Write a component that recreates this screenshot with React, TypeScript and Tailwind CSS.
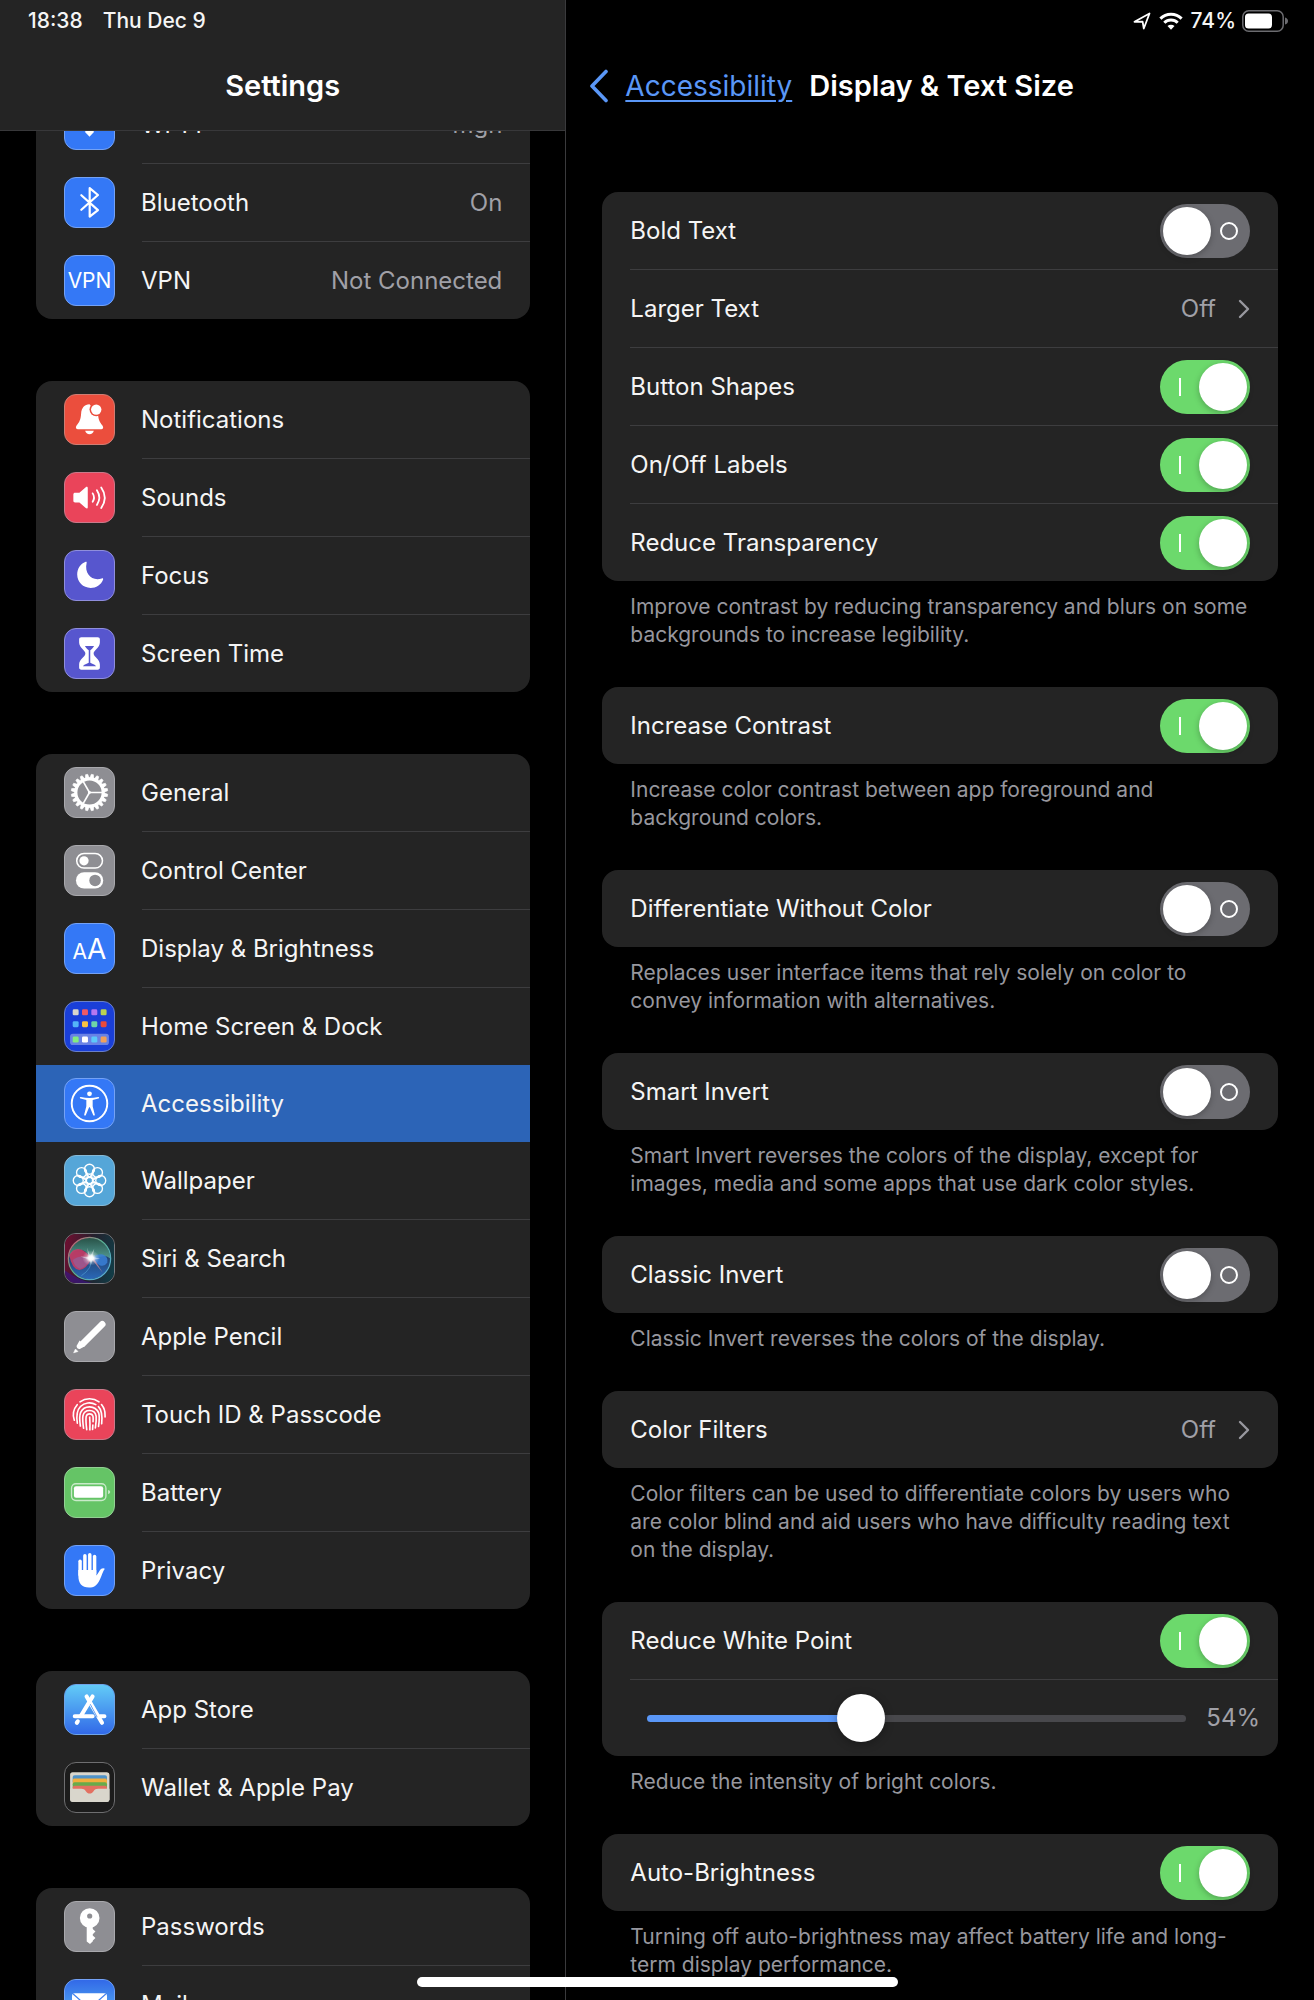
import React, { useState } from 'react';
import clsx from 'clsx';

type SidebarItem = {
  label: string;
  icon: React.ReactNode;
  tile: string;
  value?: string;
};

/* ---------- icon glyphs, drawn on a 51x51 tile ---------- */

const Glyph: React.FC<{ children: React.ReactNode }> = ({ children }) => (
  <svg viewBox="0 0 51 51" className="size-full" fill="none" stroke="none" aria-hidden="true">
    {children}
  </svg>
);

const WifiGlyph = () => (
  <Glyph>
    <g stroke="#fff" strokeWidth="3.6">
      <path d="M8.5 20.5a24 24 0 0 1 34 0" />
      <path d="M14.5 26.5a15.5 15.5 0 0 1 22 0" />
    </g>
    <path d="M25.5 38.2 20.6 33a7 7 0 0 1 9.8 0z" fill="#fff" />
  </Glyph>
);

const BluetoothGlyph = () => (
  <Glyph>
    <path
      d="M17 18 34.3 33.4 25.7 40.2V10.6l8.6 7.1L17 33"
      stroke="#fff"
      strokeWidth="2.3"
      strokeLinecap="round"
      strokeLinejoin="round"
    />
  </Glyph>
);

const BellGlyph = () => (
  <Glyph>
    <path
      d="M25.5 9.6c-5.2 0-8.4 4-8.7 9.4-.4 7-2 9.3-4.6 12.5-1.5 2-1 4.1 1 4.1H38c2 0 2.3-2.1.8-4.1-2.5-3.200-4-5.500-4.400-11.500z"
      fill="#fff"
    />
    <circle cx="32.5" cy="15.2" r="7" fill="#eb4e3d" />
    <circle cx="32.5" cy="15.2" r="5.4" fill="#fff" />
    <path d="M21 37.2h9c-.6 2.3-2.3 3.6-4.5 3.600s-3.900-1.300-4.500-3.600z" fill="#fff" />
  </Glyph>
);

const SpeakerGlyph = () => (
  <Glyph>
    <path
      d="M10.5 20.5h4.5l6.6-5.7c1-.9 2.100-.4 2.100.8v20c0 1.300-1.100 1.700-2.100.8L15 30.700h-4.500c-1.100 0-1.800-.7-1.800-1.800v-6.600c0-1.100.7-1.800 1.800-1.800z"
      fill="#fff"
    />
    <g stroke="#fff" strokeWidth="1.9" strokeLinecap="round">
      <path d="M28.8 21.2q2.8 4.4 0 8.8" />
      <path d="M33.2 18q5 7.6 0 15.2" />
      <path d="M37.7 15q7.4 10.6 0 21.5" />
    </g>
  </Glyph>
);

const MoonGlyph = () => (
  <Glyph>
    <path
      d="M21.5 11.2c-5.6 2.1-8.8 7.5-8.8 13.3 0 7.9 6.2 13.9 14 13.9 5.7 0 10.9-3.3 12.9-8.6.4-1.1-.4-1.6-1.4-1.2-9.6 3.4-18.4-4.6-15.7-16 .3-1.3-.2-1.700-1-1.400z"
      fill="#fff"
    />
  </Glyph>
);

const HourglassGlyph = () => (
  <Glyph>
    <path
      d="M17 8.7h17c1.4 0 2.3.9 2.3 2.3v3c0 5.5-6.5 8-6.5 11.5s6.5 6 6.5 11.5v3c0 1.4-.9 2.3-2.3 2.3H17c-1.4 0-2.3-.9-2.3-2.3v-3c0-5.500 6.500-8 6.500-11.500S14.700 19.500 14.700 14v-3c0-1.400.9-2.300 2.300-2.300z"
      fill="#fff"
    />
    <path
      d="M20.7 17.6h9.6c-1 2-2.700 3.300-4 4.400v13.200c2 1 5 1.600 6 3.700H18.700c1-2.100 4-2.700 6-3.700V22c-1.300-1.100-3-2.400-4-4.400z"
      fill="#5756ce"
    />
    <path d="M22.700 24v6M28.300 24v6" stroke="#fff" strokeWidth="1" />
  </Glyph>
);

const GearGlyph = () => (
  <Glyph>
    <g transform="translate(25.5 25.5)" stroke="#fff">
      <circle r="14.2" strokeWidth="3.2" />
      {Array.from({ length: 20 }, (_, i) => (
        <path key={i} d="M-2 -15h4L1.100 -19h-2.200z" fill="#fff" strokeWidth=".6" transform={`rotate(${i * 18 + 9})`} />
      ))}
      {[0, 120, 240].map((deg) => (
        <path key={deg} d="M0 0h13" strokeWidth="1.7" transform={`rotate(${deg})`} />
      ))}
      <circle r="1.500" fill="#fff" stroke="none" />
    </g>
  </Glyph>
);

const SwitchesGlyph = () => (
  <Glyph>
    <rect x="12.2" y="7.8" width="26.8" height="15.2" rx="7.6" stroke="#fff" strokeWidth="1.6" />
    <circle cx="19.8" cy="15.4" r="4.8" fill="#fff" />
    <rect x="11.4" y="27.3" width="28.4" height="17" rx="8.5" fill="#fff" />
    <circle cx="31.3" cy="35.8" r="6" fill="#8e8e93" />
  </Glyph>
);

const LettersGlyph = () => (
  <span className="flex items-baseline leading-none text-white">
    <span className="text-[21px]">A</span>
    <span className="text-[28px]">A</span>
  </span>
);

const HOME_APPS = [
  ['#d9d6cc', '#ee5a66', '#b477f0', '#b9d353'],
  ['#54b5f8', '#f7c244', '#6dd3a8', '#e84a3a'],
  ['#83ec7e', '#ffffff', '#5cc8fa', '#f2a05a'],
];

const HomeScreenGlyph = () => (
  <Glyph>
    <rect x="5.3" y="33" width="40.4" height="11.8" rx="3" fill="#fff" fillOpacity=".35" />
    {HOME_APPS.map((row, r) =>
      row.map((color, c) => (
        <rect key={color} x={8 + c * 9.7} y={[7.6, 20, 36][r]} width="6.2" height="6.2" rx="1.4" fill={color} />
      ))
    )}
  </Glyph>
);

const PersonGlyph = () => (
  <Glyph>
    <circle cx="25.5" cy="25.5" r="18.5" stroke="#fff" strokeWidth="2" />
    <circle cx="25.5" cy="15.4" r="2.5" fill="#fff" />
    <path
      d="M16.5 18.8c3 .6 6 1 9 1s6-.4 9-1c1.300-.2 1.500 1.300.3 1.600l-6 1.400v6.600l2.200 8.600c.3 1.300-1.200 1.700-1.700.5L25.900 29.500h-.8l-3.400 8c-.5 1.200-2 .8-1.700-.5l2.200-8.600v-6.600l-6-1.400c-1.200-.3-1-1.800.3-1.600z"
      fill="#fff"
    />
  </Glyph>
);

const FlowerGlyph = () => (
  <Glyph>
    <g transform="translate(25.5 25.5)" stroke="#fff" strokeWidth="1.4">
      {Array.from({ length: 8 }, (_, i) => (
        <g key={i} transform={`rotate(${i * 45})`}>
          <circle cy="-11.7" r="5.2" />
          <path d="M-5.200 -11.700C-5 -8.600 -2.400 -6 0 -3.200C2.400 -6 5 -8.600 5.200 -11.700" />
        </g>
      ))}
      <circle r="3.300" />
    </g>
  </Glyph>
);

const SiriGlyph = () => (
  <Glyph>
    <defs>
      <linearGradient id="siriBack" x1="0" y1=".4" x2="1" y2=".6">
        <stop offset="0" stopColor="#6a1030" />
        <stop offset=".5" stopColor="#24202c" />
        <stop offset="1" stopColor="#123b45" />
      </linearGradient>
      <linearGradient id="siriRing" x1="0" y1="0" x2="1" y2="1">
        <stop offset="0" stopColor="#d8546e" />
        <stop offset=".45" stopColor="#58b090" />
        <stop offset="1" stopColor="#58a8e8" />
      </linearGradient>
      <radialGradient id="siriGlow">
        <stop offset="0" stopColor="#fff" />
        <stop offset=".3" stopColor="#fff" stopOpacity=".9" />
        <stop offset=".6" stopColor="#fff" stopOpacity=".3" />
        <stop offset="1" stopColor="#fff" stopOpacity="0" />
      </radialGradient>
      <linearGradient id="siriTop" x1="0" y1="0" x2="0" y2="1">
        <stop offset="0" stopColor="#2a5a4a" />
        <stop offset="1" stopColor="#5aa796" />
      </linearGradient>
      <linearGradient id="siriBottom" x1="0" y1="0" x2="0" y2="1">
        <stop offset="0" stopColor="#1a2436" />
        <stop offset="1" stopColor="#2a68b8" />
      </linearGradient>
    </defs>
    <rect width="51" height="51" fill="url(#siriBack)" />
    <path d="M0 51V38q14 10 28 13z" fill="#3a1480" fillOpacity=".7" />
    <circle cx="25.5" cy="25.5" r="21.5" fill="url(#siriBottom)" />
    <path d="M4 25.500a21.500 21.500 0 0 1 43 0q-4-4-9-2-6 3-11 1Q20 14 12 17 6 19 4 25.500z" fill="url(#siriTop)" fillOpacity=".85" />
    <path d="M4.500 22q5-9 13-5.500 5 2.500 10 9-5 11-12.500 12-8-1-10.500-15.500z" fill="#c83c66" fillOpacity=".9" />
    <path d="M8 27q8-6 19-2-4 9-11 11.500-6-2-8-9.500z" fill="#8a6aa8" fillOpacity=".55" />
    <path d="M27 25.500q7-5.500 12.500-4.200 6 3 4.500 8.700-3 4.500-8 2.500-5-2.500-9-7z" fill="#3a80d8" fillOpacity=".85" />
    <path d="M27 25.500q2 10-10 18" stroke="#58a8d8" strokeOpacity=".6" />
    <path d="M28 26.500 39 40l-8.500-14z" fill="#d890a0" fillOpacity=".7" />
    <circle cx="25.5" cy="25.5" r="22" stroke="url(#siriRing)" strokeWidth="1.3" />
    <ellipse cx="27" cy="25" rx="9" ry="8" fill="url(#siriGlow)" />
    <path d="M23 14l3.200 9.500L30.500 15l-1.800 9 8 1.800-8 1-1.700 5-1.700-5-9.300-3.300 8.500.5z" fill="#fff" fillOpacity=".45" />
  </Glyph>
);

const PencilGlyph = () => (
  <Glyph>
    <path d="M38.8 12.7 18.500 33" stroke="#fff" strokeWidth="6.8" strokeLinecap="round" />
    <path d="M21 35.400l-5.500 3.100q-1.500.3-2.600-.8t-.8-2.600l3.100-5.500z" fill="#fff" />
    <path d="M9 42.500l1.900-4 2.600 2.600z" fill="#fff" stroke="#fff" strokeWidth=".6" strokeLinejoin="round" />
  </Glyph>
);

const FingerprintGlyph = () => (
  <Glyph>
    <g stroke="#fff" strokeWidth="1.7" strokeLinecap="round">
      <path d="M15.6 12.3a17 17 0 0 1 19.8 0" />
      <path d="M12.7 15.3A16.5 16.5 0 0 0 9.7 31.5" />
      <path d="M38 15.2a16.5 16.5 0 0 1 3.7 11.3v1.5" />
      <path d="M12.8 34.5c-1.200-8-.4-13.500 3.300-17.300a13.200 13.200 0 0 1 16-2" />
      <path d="M34.8 17.300c3.400 3.400 4.200 9 3.400 17.800" />
      <path d="M16 37.500c-.8-6-1.300-10.700.2-14a10.300 10.300 0 0 1 18.800.3c1 3 .7 8.500-.1 14" />
      <path d="M19.300 39.800c-.7-5-1.200-9.800-.6-13a7 7 0 0 1 13.700.3c.3 3.500-.1 8-.8 12.400" />
      <path d="M22.600 41.300c-.6-5-1.100-9.800-.6-13.600a3.700 3.700 0 0 1 7.200 0c.2 2 .2 3.600 0 5.300" />
      <path d="M25.700 28.300c.3 4.500.4 8.600.2 13.200M29 36.500l-.3 4.600" />
    </g>
  </Glyph>
);

const BatteryGlyph = () => (
  <Glyph>
    <rect x="6.8" y="16.4" width="35.8" height="17.4" rx="4.6" stroke="#fff" strokeOpacity=".65" strokeWidth="1.4" />
    <rect x="9.3" y="19" width="30.4" height="12" rx="2.2" fill="#fff" />
    <path d="M44.8 22.8q2.3.6 2.3 2.3t-2.3 2.3z" fill="#fff" fillOpacity=".65" />
  </Glyph>
);

const HandGlyph = () => (
  <Glyph>
    <g stroke="#fff" strokeWidth="3.6" strokeLinecap="round">
      <path d="M15.7 15.8V30" />
      <path d="M20.7 10.2V29" />
      <path d="M25.8 9V29" />
      <path d="M30.8 10.8V29" />
    </g>
    <path
      d="M13.9 25h18.700v5.600c2-1.700 2.900-5.200 4.800-6.700 1.400-1.100 3.300-1.100 4-.2.200.4-.8 1-1.500 2.500-1.600 3.300-2.700 7.500-4.600 10.800-2.200 4-5 6.300-10.300 6.300-7.600 0-11.100-4.600-11.100-12.300z"
      fill="#fff"
    />
  </Glyph>
);

const AppStoreGlyph = () => (
  <Glyph>
    <defs>
      <linearGradient id="storeBack" x1="0" y1="0" x2="0" y2="1">
        <stop offset="0" stopColor="#62cbf7" />
        <stop offset="1" stopColor="#3269e8" />
      </linearGradient>
    </defs>
    <rect width="51" height="51" fill="url(#storeBack)" />
    <g stroke="#fff" strokeWidth="4.3" strokeLinecap="round">
      <path d="M28.7 12 16.8 31.8" />
      <path d="M22.5 12l16 27.3" />
      <path d="M10.2 32.5h18.5M36.5 32.5h4.5" />
      <path d="M13.3 37.8l-1 1.5" />
    </g>
    <path d="M26.300 20 33.500 33.500" stroke="#4a8ff0" strokeWidth=".9" />
  </Glyph>
);

const WalletGlyph = () => (
  <Glyph>
    <rect x="5.3" y="9.7" width="41" height="31" rx="2.6" fill="#d9d6cc" />
    <path d="M10 12.700h31.700q2 0 2 2V20H8v-5.300q0-2 2-2z" fill="#4f93c8" />
    <path d="M10 16.200h31.700q2 0 2 2V22H8v-3.800q0-2 2-2z" fill="#f2ae3d" />
    <path d="M10 20h31.700q2 0 2 2v4H8v-4q0-2 2-2z" fill="#68ab4b" />
    <path d="M10 23.800h31.700q2 0 2 2V34H8v-8.200q0-2 2-2z" fill="#e37061" />
    <path
      d="M5.300 26.800H17c2.200 0 3.500.8 4.700 2.500 1.100 1.500 2.300 2.500 4 2.500s2.900-1 4-2.500c1.200-1.700 2.500-2.500 4.700-2.500h11.900v11.300q0 2.600-2.600 2.600H7.900q-2.600 0-2.600-2.600z"
      fill="#d9d6cc"
    />
  </Glyph>
);

const KeyGlyph = () => (
  <Glyph>
    <circle cx="25.7" cy="16.7" r="10.2" fill="#fff" />
    <path d="M22.6 25h6.300v3l2.800 2.700-2.800 2.800v1.300l2.800 2.700-2.700 2.600v.8L26 43.800l-3.400-2.700z" fill="#fff" />
    <circle cx="25.7" cy="14.6" r="2.7" fill="#8e8e93" />
  </Glyph>
);

const MailGlyph = () => (
  <Glyph>
    <defs>
      <linearGradient id="mailBack" x1="0" y1="0" x2="0" y2="1">
        <stop offset="0" stopColor="#3269e8" />
        <stop offset="1" stopColor="#62cbf7" />
      </linearGradient>
    </defs>
    <rect width="51" height="51" fill="url(#mailBack)" />
    <rect x="7.3" y="13.8" width="36.4" height="24" rx="3" fill="#fff" />
    <path d="M8.5 14.5 23 27.5q2.5 2 5 0L42.5 14.5" stroke="#4583ee" strokeWidth="1.3" />
  </Glyph>
);

const VpnGlyph = () => <span className="text-[21px] leading-none text-white">VPN</span>;

/* ---------- sidebar ---------- */

const BLUE = 'bg-[#3478f6] border-[#74a2f5]';
const GRAY = 'bg-[#8e8e93] border-[#a9a9ad]';
const PURPLE = 'bg-[#5756ce] border-[#8f8edc]';
const PINK = 'bg-[#ea445a] border-[#c9798a]';

const SIDEBAR_GROUPS: SidebarItem[][] = [
  [
    { label: 'Wi-Fi', icon: <WifiGlyph />, tile: BLUE, value: 'mgh' },
    { label: 'Bluetooth', icon: <BluetoothGlyph />, tile: BLUE, value: 'On' },
    { label: 'VPN', icon: <VpnGlyph />, tile: BLUE, value: 'Not Connected' },
  ],
  [
    { label: 'Notifications', icon: <BellGlyph />, tile: 'bg-[#eb4e3d] border-[#cf7d73]' },
    { label: 'Sounds', icon: <SpeakerGlyph />, tile: PINK },
    { label: 'Focus', icon: <MoonGlyph />, tile: PURPLE },
    { label: 'Screen Time', icon: <HourglassGlyph />, tile: PURPLE },
  ],
  [
    { label: 'General', icon: <GearGlyph />, tile: GRAY },
    { label: 'Control Center', icon: <SwitchesGlyph />, tile: GRAY },
    { label: 'Display & Brightness', icon: <LettersGlyph />, tile: BLUE },
    { label: 'Home Screen & Dock', icon: <HomeScreenGlyph />, tile: 'bg-[#1a3fd8] border-[#6a80c8]' },
    { label: 'Accessibility', icon: <PersonGlyph />, tile: BLUE },
    { label: 'Wallpaper', icon: <FlowerGlyph />, tile: 'bg-[#55a6d8] border-[#86b9d6]' },
    { label: 'Siri & Search', icon: <SiriGlyph />, tile: 'bg-[#1c1c1e] border-[#7a7a80]' },
    { label: 'Apple Pencil', icon: <PencilGlyph />, tile: GRAY },
    { label: 'Touch ID & Passcode', icon: <FingerprintGlyph />, tile: PINK },
    { label: 'Battery', icon: <BatteryGlyph />, tile: 'bg-[#65c466] border-[#93d094]' },
    { label: 'Privacy', icon: <HandGlyph />, tile: BLUE },
  ],
  [
    { label: 'App Store', icon: <AppStoreGlyph />, tile: 'bg-[#3e85ee] border-[#6fa4e8]' },
    { label: 'Wallet & Apple Pay', icon: <WalletGlyph />, tile: 'bg-[#1c1c1c] border-[#6e6e70]' },
  ],
  [
    { label: 'Passwords', icon: <KeyGlyph />, tile: GRAY },
    { label: 'Mail', icon: <MailGlyph />, tile: 'bg-[#3e85ee] border-[#74a2f5]' },
  ],
];

const SidebarGroup: React.FC<{
  items: SidebarItem[];
  selected: string;
  onSelect: (label: string) => void;
}> = ({ items, selected, onSelect }) => (
  <ul className="overflow-hidden rounded-2xl bg-[#242424]">
    {items.map((item, i) => {
      const active = item.label === selected;
      const showLine = i > 0 && !active && items[i - 1].label !== selected;
      return (
        <li key={item.label}>
          {showLine && <div className="ml-[106px] h-px bg-[#3d3d3f]" />}
          <a
            href={`#${item.label.toLowerCase().replace(/[^a-z]+/g, '-')}`}
            onClick={() => onSelect(item.label)}
            aria-current={active ? 'page' : undefined}
            className={clsx('flex h-[77px] items-center px-7', active && 'bg-[#2c64b7]')}
          >
            <span
              className={clsx(
                'flex size-[51px] shrink-0 items-center justify-center overflow-hidden rounded-xl border',
                item.tile
              )}
            >
              {item.icon}
            </span>
            <span className="ml-[26px] flex-1">{item.label}</span>
            {item.value && <span className="text-[#a0a0a7]">{item.value}</span>}
          </a>
        </li>
      );
    })}
  </ul>
);

/* ---------- detail pane ---------- */

const Card: React.FC<{ children: React.ReactNode; footer?: string }> = ({ children, footer }) => (
  <section className="mb-[38px]">
    <div className="overflow-hidden rounded-2xl bg-[#242424]">{children}</div>
    {footer && <p className="px-7 pt-3 text-[21px] leading-7 text-[#97979e]">{footer}</p>}
  </section>
);

const Line = () => <div className="ml-7 h-px bg-[#3d3d3f]" />;

const ToggleRow: React.FC<{ label: string; on?: boolean }> = ({ label, on = false }) => {
  const [checked, setChecked] = useState(on);
  return (
    <label className="flex h-[77px] items-center justify-between px-7">
      <span>{label}</span>
      <input
        type="checkbox"
        role="switch"
        checked={checked}
        onChange={(e) => setChecked(e.target.checked)}
        className={clsx(
          'flex h-[54px] w-[90px] shrink-0 appearance-none items-center justify-between rounded-full p-[3px]',
          'before:size-12 before:rounded-full before:bg-white before:shadow-[0_2px_6px_rgba(0,0,0,0.25)]',
          checked
            ? 'flex-row-reverse bg-[#6cd96c] after:ml-4 after:h-[18px] after:w-[2px] after:bg-white'
            : 'bg-[#6c6c71] after:mr-[9px] after:size-[18px] after:rounded-full after:border-2 after:border-white'
        )}
      />
    </label>
  );
};

const LinkRow: React.FC<{ label: string; value: string }> = ({ label, value }) => (
  <button type="button" className="flex h-[77px] w-full items-center px-7 text-left">
    <span className="flex-1">{label}</span>
    <span className="text-[#a0a0a7]">{value}</span>
    <svg viewBox="0 0 12 20" className="ml-[22px] h-5 w-3" fill="none" stroke="#98989f" strokeWidth="2.4" aria-hidden="true">
      <path d="M2 2l8 8-8 8" strokeLinecap="round" strokeLinejoin="round" />
    </svg>
  </button>
);

const MIN_POINT = 25;
const MAX_POINT = 100;

const WhitePointSlider = () => {
  const [value, setValue] = useState(54);
  const fill = ((value - MIN_POINT) / (MAX_POINT - MIN_POINT)) * 100;
  return (
    <div className="flex h-[76px] items-center gap-5 pl-[45px] pr-[18px]">
      <input
        type="range"
        aria-label="Reduce White Point amount"
        min={MIN_POINT}
        max={MAX_POINT}
        value={value}
        onChange={(e) => setValue(Number(e.target.value))}
        style={{ backgroundImage: `linear-gradient(to right, #5a97f7 ${fill}%, #48484c ${fill}%)` }}
        className="h-[7px] min-w-0 flex-1 appearance-none rounded-full [&::-webkit-slider-thumb]:size-12 [&::-webkit-slider-thumb]:appearance-none [&::-webkit-slider-thumb]:rounded-full [&::-webkit-slider-thumb]:bg-white [&::-webkit-slider-thumb]:shadow-[0_2px_10px_rgba(0,0,0,0.3)]"
      />
      <span className="text-[#a0a0a7]">{value}%</span>
    </div>
  );
};

const StatusIcons = () => (
  <div className="flex h-[42px] shrink-0 items-center justify-end pr-[26px] text-[21px] font-medium">
    <svg viewBox="0 0 18 18" className="size-[18px]" fill="none" stroke="#fff" strokeWidth="1.8" strokeLinejoin="round" aria-hidden="true">
      <path d="M1.5 9.8 16.5 1.5 10.8 16.5 9.6 9.6z" />
    </svg>
    <svg viewBox="0 0 24 18" className="ml-2 h-[18px] w-6" fill="none" stroke="#fff" strokeWidth="3" aria-hidden="true">
      <path d="M1.4 6.6a15 15 0 0 1 21.2 0" />
      <path d="M5.3 10.7a9.5 9.5 0 0 1 13.4 0" />
      <path d="M12 17.8l-3.5-3.7a5 5 0 0 1 7 0z" fill="#fff" stroke="none" />
    </svg>
    <span className="ml-2">74%</span>
    <svg viewBox="0 0 46 22" className="ml-[6px] h-[22px] w-[46px]" aria-hidden="true">
      <rect x=".8" y=".8" width="40.4" height="20.4" rx="6" fill="none" stroke="#6c6c70" strokeWidth="1.5" />
      <rect x="3" y="3.500" width="27" height="15" rx="3.5" fill="#fff" />
      <path d="M43 7.5q3 1 3 3.5t-3 3.5z" fill="#6c6c70" />
    </svg>
  </div>
);

export default function App() {
  const [selected, setSelected] = useState('Accessibility');

  return (
    <div className="relative flex h-screen overflow-hidden bg-black font-['Inter','Liberation_Sans',sans-serif] text-[24px] leading-8 text-[#f5f5f5]">
      {/* Sidebar */}
      <aside className="flex w-[43.1%] shrink-0 flex-col border-r border-[#3a3a3c]">
        <header className="z-10 shrink-0 border-b border-[#38383a] bg-[#242424]">
          <div className="flex h-[42px] items-center gap-5 pl-7 text-[21px] font-medium">
            <span>18:38</span>
            <span>Thu Dec 9</span>
          </div>
          <h1 className="flex h-[88px] items-center justify-center text-[29px] font-semibold text-white">Settings</h1>
        </header>
        {/* list is scrolled a little, its first row sits under the header */}
        <nav className="-mt-[45px] flex flex-col gap-[62px] pl-9 pr-[35px]">
          {SIDEBAR_GROUPS.map((items) => (
            <SidebarGroup key={items[0].label} items={items} selected={selected} onSelect={setSelected} />
          ))}
        </nav>
      </aside>

      {/* Detail */}
      <main className="flex min-w-0 flex-1 flex-col">
        <StatusIcons />
        <header className="flex h-[88px] shrink-0 items-center pl-[23px] text-[29px]">
          <svg viewBox="0 0 20 34" className="h-[34px] w-5" fill="none" stroke="#5a97f7" strokeWidth="3.6" aria-hidden="true">
            <path d="M17 2.5 3 17l14 14.5" strokeLinecap="round" strokeLinejoin="round" />
          </svg>
          <a href="#accessibility" className="ml-4 text-[28px] text-[#5a97f7] underline decoration-2 underline-offset-4">
            Accessibility
          </a>
          <h2 className="ml-[17px] font-semibold text-white">Display &amp; Text Size</h2>
        </header>

        <div className="px-9 pt-[62px]">
          <Card footer="Improve contrast by reducing transparency and blurs on some backgrounds to increase legibility.">
            <ToggleRow label="Bold Text" />
            <Line />
            <LinkRow label="Larger Text" value="Off" />
            <Line />
            <ToggleRow label="Button Shapes" on />
            <Line />
            <ToggleRow label="On/Off Labels" on />
            <Line />
            <ToggleRow label="Reduce Transparency" on />
          </Card>
          <Card footer="Increase color contrast between app foreground and background colors.">
            <ToggleRow label="Increase Contrast" on />
          </Card>
          <Card footer="Replaces user interface items that rely solely on color to convey information with alternatives.">
            <ToggleRow label="Differentiate Without Color" />
          </Card>
          <Card footer="Smart Invert reverses the colors of the display, except for images, media and some apps that use dark color styles.">
            <ToggleRow label="Smart Invert" />
          </Card>
          <Card footer="Classic Invert reverses the colors of the display.">
            <ToggleRow label="Classic Invert" />
          </Card>
          <Card footer="Color filters can be used to differentiate colors by users who are color blind and aid users who have difficulty reading text on the display.">
            <LinkRow label="Color Filters" value="Off" />
          </Card>
          <Card footer="Reduce the intensity of bright colors.">
            <ToggleRow label="Reduce White Point" on />
            <Line />
            <WhitePointSlider />
          </Card>
          <Card footer="Turning off auto-brightness may affect battery life and long-term display performance.">
            <ToggleRow label="Auto-Brightness" on />
          </Card>
        </div>
      </main>

      {/* Home indicator */}
      <div className="absolute inset-x-0 bottom-[13px] z-20 mx-auto h-[10px] w-[481px] rounded-full bg-white" />
    </div>
  );
}
